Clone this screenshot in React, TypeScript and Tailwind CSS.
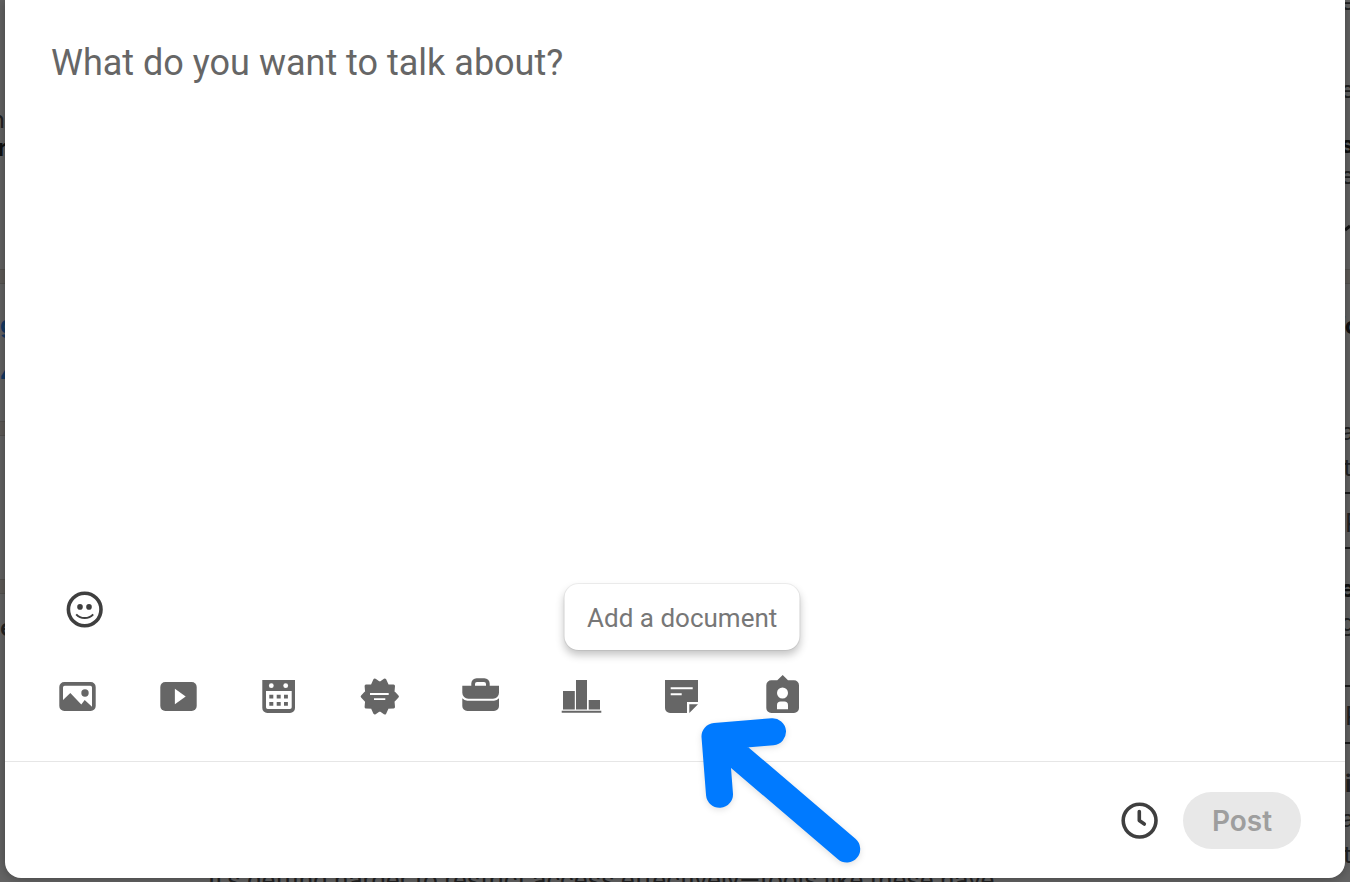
import type { ReactNode } from "react";

type Tool = {
  label: string;
  icon: ReactNode;
  tooltip?: boolean;
};

const tools: Tool[] = [
  {
    label: "Add media",
    icon: (
      <>
        <path
          fillRule="evenodd"
          d="M6.3 6h26.4a5 5 0 0 1 5 5v19a5 5 0 0 1-5 5H6.3a5 5 0 0 1-5-5V11a5 5 0 0 1 5-5Zm.4 3.7A1.7 1.7 0 0 0 5 11.4V24l7.3-6.9 11 11.4 3.4-4.5 7.3 6.7V11.4a1.7 1.7 0 0 0-1.7-1.7Z"
        />
        <circle cx="27" cy="17" r="3.7" />
      </>
    ),
  },
  {
    label: "Add a video",
    icon: (
      <>
        <rect x="1.3" y="6" width="36.4" height="29" rx="5" />
        <path fill="#fff" d="M15.9 12.7v15.6l10.8-7.8Z" />
      </>
    ),
  },
  {
    label: "Create an event",
    icon: (
      <>
        <path
          fillRule="evenodd"
          d="M3.3 4H36v28a5 5 0 0 1-5 5H8.3a5 5 0 0 1-5-5ZM7 15v16.3A1.7 1.7 0 0 0 8.7 33H31a1.7 1.7 0 0 0 1.7-1.7V15Z"
        />
        <circle cx="12.3" cy="9.7" r="2.4" fill="#fff" />
        <circle cx="26.7" cy="9.7" r="2.4" fill="#fff" />
        <path d="M10.3 18.7h4v3.8h-4ZM17.7 18.7h4v3.8h-4ZM25 18.7h3.9v3.8H25ZM10.3 26h4v3.8h-4ZM17.7 26h4v3.8h-4ZM25 26h3.9v3.8H25Z" />
      </>
    ),
  },
  {
    label: "Celebrate an occasion",
    icon: (
      <>
        <path
          stroke="currentColor"
          strokeWidth="3"
          strokeLinejoin="round"
          d="m14.8 4 5 3.4 5-3.4 2.7 5.8 6 .2-.5 5.9 4.4 4.6-4.4 4.6.5 5.9-6 .2-2.7 5.8-5-3.4-5 3.4-2.7-5.8-6-.2.5-5.9-4.4-4.6 4.4-4.6-.5-5.9 6-.2Z"
        />
        <path fill="#fff" d="M10 16.9h18.7v2H10ZM14 22.2h11.3v1.9H14Z" />
      </>
    ),
  },
  {
    label: "Share that you're hiring",
    icon: (
      <>
        <path
          fillRule="evenodd"
          d="M10.3 9.7V7.6a5.3 5.3 0 0 1 5.3-5.3h7.8a5.3 5.3 0 0 1 5.3 5.3v2.1H38v7a6 6 0 0 1-6 6H7.3a6 6 0 0 1-6-6v-7Zm3.7 0h11V8a2 2 0 0 0-2-2h-7a2 2 0 0 0-2 2Z"
        />
        <path d="M1.3 22.2a7 7 0 0 0 5 2.5H33a7 7 0 0 0 5-2.5V30a5 5 0 0 1-5 5H6.3a5 5 0 0 1-5-5Z" />
      </>
    ),
  },
  {
    label: "Create a poll",
    icon: (
      <path d="M1 15h11.8v18.6H1ZM14 4h11v29.6H14ZM26.7 24H38v9.6H26.7ZM-.3 34.8h39.6v2H-.3Z" />
    ),
  },
  {
    label: "Add a document",
    tooltip: true,
    icon: (
      <>
        <path d="M3 4h33v22H25v11H8a5 5 0 0 1-5-5ZM27.3 28.2H36L27.3 37Z" />
        <path fill="#fff" d="M8.7 11.3h22v2h-22ZM8.7 17.2h11v2h-11Z" />
      </>
    ),
  },
  {
    label: "Find an expert",
    icon: (
      <>
        <path d="M8.3 4.3h6L19.7-1l5.3 5.3h6a5 5 0 0 1 5 5V32a5 5 0 0 1-5 5H8.3a5 5 0 0 1-5-5V9.3a5 5 0 0 1 5-5Z" />
        <circle cx="19.5" cy="17" r="5.5" fill="#fff" />
        <path
          fill="#fff"
          d="M14 33.3v-4a3.7 3.7 0 0 1 3.7-3.7h3.6a3.7 3.7 0 0 1 3.7 3.7v4Z"
        />
      </>
    ),
  },
];

function ToolButton({ label, icon, tooltip }: Tool) {
  return (
    <div className="relative">
      <button
        type="button"
        aria-label={label}
        className="block size-10 text-[#666666]"
      >
        <svg
          viewBox="0 0 40 40"
          fill="currentColor"
          className="size-10 overflow-visible"
          aria-hidden="true"
        >
          {icon}
        </svg>
      </button>
      {tooltip && (
        <div
          role="tooltip"
          className="absolute bottom-full left-1/2 mb-[26px] flex h-[66px] w-[235px] -translate-x-1/2 items-center justify-center rounded-[14px] bg-white pt-[2px] font-['Roboto','Liberation_Sans',sans-serif] text-[26px] whitespace-nowrap text-[#777777] shadow-[0_0_0_1px_rgba(0,0,0,0.06),0_5px_8px_rgba(0,0,0,0.24)]"
        >
          {label}
        </div>
      )}
    </div>
  );
}

// the feed, only visible around the edges of the dialog
function Feed() {
  return (
    <div
      aria-hidden="true"
      className="absolute inset-0 flex flex-col overflow-hidden bg-[#646464] text-[24px] leading-7 text-[#222222]"
    >
      <div className="flex h-[878px] shrink-0 justify-between">
        <div className="flex w-[5px] flex-col overflow-hidden">
          <span className="mt-[106px] flex h-7 justify-end">n</span>
          <span className="flex h-7 justify-center font-bold text-[#111111]">
            r
          </span>
          <span className="mt-[107px] h-[15px] shrink-0 border-y border-[#555350] bg-[#5f5c59]" />
          <span className="mt-[27px] flex h-7 font-bold text-[#153a66]">g</span>
          <span className="mt-[21px] flex h-7 font-bold text-[#153a66]">4</span>
          <span className="mt-[33px] h-[15px] shrink-0 border-y border-[#555350] bg-[#5f5c59]" />
          <span className="mt-[143px] h-[15px] shrink-0 border-y border-[#555350] bg-[#5f5c59]" />
          <span className="mt-[20px] flex h-7 font-semibold">e</span>
        </div>
        <div className="flex w-[5px] flex-col overflow-hidden">
          <span className="flex h-4 items-end justify-center">e</span>
          <span className="mt-[60px] flex h-7 justify-center">e</span>
          <span className="mt-[27px] flex h-7 justify-center font-bold text-[#111111]">
            s
          </span>
          <span className="mt-[3px] flex h-7 justify-center">e</span>
          <svg viewBox="0 0 5 10" className="mt-[32px] h-[10px] w-[5px] shrink-0">
            <path d="M0 8 5 4" stroke="#151515" strokeWidth="3" />
          </svg>
          <span className="mt-[37px] h-[15px] shrink-0 border-y border-[#555350] bg-[#5f5c59]" />
          <span className="mt-[28px] flex h-7 justify-center font-bold text-[#111111]">
            fo
          </span>
          <span className="mt-[78px] flex h-7 justify-center">a</span>
          <span className="mt-[8px] flex h-7 justify-center">t</span>
          <span className="mt-[10px] h-[2px] shrink-0 bg-[#1c1c1c]" />
          <span className="mt-[15px] flex h-7 text-[26px]">P</span>
          <span className="mt-[10px] h-[2px] shrink-0 bg-[#1c1c1c]" />
          <span className="mt-[26px] flex h-7 justify-center font-bold text-[#111111]">
            e
          </span>
          <span className="mt-[6px] flex h-7 justify-center">g</span>
          <span className="mt-[48px] h-[2px] shrink-0 bg-[#1c1c1c]" />
          <span className="mt-[15px] flex h-7 text-[26px]">P</span>
          <span className="mt-[12px] h-[2px] shrink-0 bg-[#1c1c1c]" />
          <span className="mt-[26px] flex h-7 font-bold">it</span>
          <span className="mt-[7px] flex h-7 justify-center">a</span>
          <span className="mt-[8px] flex h-7 justify-center">t</span>
        </div>
      </div>
      <p className="-mt-3 shrink-0 pl-[208px] font-['Roboto','Liberation_Sans',sans-serif] text-[26px] whitespace-nowrap">
        It's getting harder to restrict access effectively—tools like these have
      </p>
    </div>
  );
}

export default function App() {
  return (
    <main className="relative flex h-screen flex-col overflow-hidden px-[5px] pb-1 font-['Inter','Liberation_Sans',sans-serif]">
      <Feed />

      <form
        role="dialog"
        aria-label="Create a post"
        className="relative flex flex-1 flex-col rounded-b-[16px] bg-white shadow-[0_0_12px_rgba(0,0,0,0.35)]"
        onSubmit={(e) => e.preventDefault()}
      >
        <textarea
          aria-label="Post text"
          placeholder="What do you want to talk about?"
          className="mt-10 flex-1 resize-none px-[46px] font-['Roboto','Liberation_Sans',sans-serif] text-[36px] leading-[46px] outline-none placeholder:text-[#666666]"
        />

        <div className="mt-6 px-[60px]">
          <button
            type="button"
            aria-label="Open Emoji Keyboard"
            className="block size-10 text-[#3f3f3f]"
          >
            <svg viewBox="0 0 40 40" fill="none" className="size-10">
              <circle
                cx="19.7"
                cy="20.5"
                r="16.3"
                stroke="currentColor"
                strokeWidth="3.6"
              />
              <circle cx="15" cy="17.9" r="2.8" fill="currentColor" />
              <circle cx="24" cy="17.9" r="2.8" fill="currentColor" />
              <path
                d="M11.2 25.4c4.4 4.9 12.6 4.9 17 0"
                stroke="currentColor"
                strokeWidth="2"
              />
            </svg>
          </button>
        </div>

        {/* attachment toolbar */}
        <div className="mt-[47px] mb-[45px] ml-[53px] flex w-[745px] justify-between">
          {tools.map((tool) => (
            <ToolButton key={tool.label} {...tool} />
          ))}
        </div>

        <footer className="flex h-[117px] items-center justify-end gap-6 border-t border-[#e6e6e6] pr-[44px]">
          <button
            type="button"
            aria-label="Schedule for later"
            className="block size-10 text-[#3f3f3f]"
          >
            <svg viewBox="0 0 40 40" fill="none" className="size-10">
              <g stroke="currentColor" strokeWidth="3.6">
                <circle cx="20.6" cy="20.6" r="16.4" />
                <path
                  d="M20.3 11.6v9l5 3.4"
                  strokeLinecap="round"
                  strokeLinejoin="round"
                />
              </g>
            </svg>
          </button>
          <button
            type="submit"
            disabled
            className="h-[57px] w-[118px] rounded-full bg-[#e8e8e8] pt-[2px] text-[28px] font-semibold text-[#9e9e9e]"
          >
            Post
          </button>
        </footer>
      </form>

      {/* arrow pointing at the document button */}
      <svg
        viewBox="0 0 180 160"
        fill="none"
        aria-hidden="true"
        className="pointer-events-none absolute top-[710px] left-[690px] h-[160px] w-[180px] drop-shadow-[0_2px_3px_rgba(0,0,0,0.12)]"
      >
        <path
          d="M82.5 21.7 25 26.5l4.5 57.8M25 26.5 156.7 139"
          stroke="#007aff"
          strokeWidth="27"
          strokeLinecap="round"
          strokeLinejoin="round"
        />
      </svg>
    </main>
  );
}
